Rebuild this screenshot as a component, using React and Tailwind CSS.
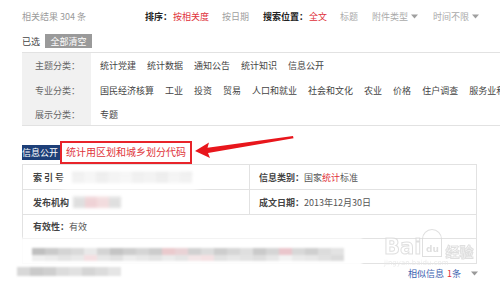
import { ChevronDown } from 'lucide-react';

const topics = ['统计党建', '统计数据', '通知公告', '统计知识', '信息公开'];
const majors = ['国民经济核算', '工业', '投资', '贸易', '人口和就业', '社会和文化', '农业', '价格', '住户调查', '服务业和'];

const blurLine1 = ['#b8b8b8', '#c4c4c4', '#cfcfcf', '#d6d6d6', '#e6e6e6', '#cfcfcf', '#bdbdbd', '#c8c8c8', '#d0d0d0', '#c6c6c6', '#e8c4c8', '#e6cdd0', '#cccccc', '#d8d8d8', '#c8c8c8', '#d2d2d2', '#dcdcdc', '#c4c4c4', '#d0d0d0', '#e8c0c6', '#d4d4d4', '#cacaca', '#d8d8d8', '#e0e0e0'];
const blurLine3 = ['#d4d4d4', '#c4c4c4', '#cacaca', '#d8d8d8', '#dedede', '#d0d0d0', '#d8d8d8', '#e2e2e2'];
const blurRow1 = ['#d6d6d6', '#e4e4e4', '#cfcfcf', '#dedede', '#e6e6e6', '#d4d4d4', '#dcdcdc', '#cccccc', '#e0e0e0', '#d6d6d6'];
const blurRow2 = ['#d8d8d8', '#ecc8cc', '#f0d4d6', '#d8d8d8'];

const Caret = () => (
  <svg width="7" height="5" viewBox="0 0 7 5" className="ml-[3px]">
    <path d="M0 0.5h7L3.5 4.5z" fill="#a0a0a0" />
  </svg>
);

const Blocks = ({ colors, w, h }) => (
  <div className="flex">
    {colors.map((c, i) => (
      <div key={i} style={{ background: c, width: w, height: h }} />
    ))}
  </div>
);

export default function App() {
  return (
    <div className="relative w-[500px] h-[286px] overflow-hidden bg-white font-['Noto_Sans_CJK_SC',sans-serif] text-[9px] leading-none text-[#333]">
      {/* result bar */}
      <div className="flex items-center h-[32px] pl-[22px]">
        <span className="w-[123px] text-[#9a9a9a]">相关结果 304 条</span>
        <span className="font-bold text-[#222]">排序：</span>
        <span className="ml-[1px] text-[#e0303a]">按相关度</span>
        <span className="ml-[13px] text-[#a0a0a0]">按日期</span>
        <span className="ml-[14px] font-bold text-[#222]">搜索位置：</span>
        <span className="ml-[1px] text-[#e0303a]">全文</span>
        <span className="ml-[13px] text-[#aaa]">标题</span>
        <span className="ml-[14px] flex items-center text-[#aaa]">附件类型<Caret /></span>
        <span className="ml-[15px] flex items-center text-[#aaa]">时间不限<Caret /></span>
      </div>

      {/* selected */}
      <div className="flex items-center h-[18px] pl-[22px]">
        <span className="text-[#444]">已选</span>
        <span className="ml-[5px] flex items-center justify-center w-[47px] h-[14px] bg-[#9a9a9a] text-white">全部清空</span>
      </div>

      {/* filter box */}
      <div className="ml-[22px] mt-[2px] border-t border-b border-[#e2e2e2]">
        {[
          ['主题分类：', topics, 'h-[25px]'],
          ['专业分类：', majors, 'h-[25px]'],
          ['展示分类：', ['专题'], 'h-[22px]'],
        ].map(([label, items, h]) => (
          <div key={label} className={`flex ${h}`}>
            <div className="w-[69px] shrink-0 bg-[#f1f1f1] flex items-center pl-[13px] text-[#666]">{label}</div>
            <div className="flex items-center gap-[11px] pl-[9px] whitespace-nowrap text-[#444]">
              {items.map((t) => (
                <span key={t}>{t}</span>
              ))}
            </div>
          </div>
        ))}
      </div>

      {/* title */}
      <div className="flex items-center h-[24px] ml-[22px] mt-[14px]">
        <span className="flex items-center h-[15px] w-[38px] bg-[#1d3f78] text-white whitespace-nowrap overflow-hidden">信息公开</span>
        <span className="flex items-center h-[23px] px-[4px] border-2 border-[#e8242a] text-[10px] text-[#e0343a]">统计用区划和城乡划分代码</span>
      </div>

      {/* detail table */}
      <div className="ml-[22px] w-[455px] border border-[#e2e2e2] text-[#555]">
        <div className="flex h-[25px] border-b border-[#e2e2e2]">
          <div className="w-[227px] flex items-center pl-[10px] border-r border-[#e2e2e2]">
            <span className="font-bold text-[#444] tracking-[2px]">索引号</span>
            <div className="ml-[6px] opacity-80 blur-[1.5px]">
              <Blocks colors={blurRow1} w={12} h={11} />
            </div>
          </div>
          <div className="flex items-center pl-[9px]">
            <span className="font-bold text-[#444]">信息类别：</span>
            <span>国家</span>
            <span className="text-[#e0303a]">统计</span>
            <span>标准</span>
          </div>
        </div>
        <div className="flex h-[25px] border-b border-[#e2e2e2]">
          <div className="w-[227px] flex items-center pl-[10px] border-r border-[#e2e2e2]">
            <span className="font-bold text-[#444]">发布机构</span>
            <div className="ml-[4px] opacity-80 blur-[1.5px]">
              <Blocks colors={blurRow2} w={12} h={12} />
            </div>
          </div>
          <div className="flex items-center pl-[9px]">
            <span className="font-bold text-[#444]">成文日期：</span>
            <span>2013年12月30日</span>
          </div>
        </div>
        <div className="flex items-center h-[24px] pl-[10px] border-b border-[#e2e2e2]">
          <span className="font-bold text-[#444]">有效性：</span>
          <span>有效</span>
        </div>
        <div className="h-[24px]" />
      </div>

      {/* similar */}
      <div className="flex items-center justify-end h-[16px] w-[478px] mt-[1px] text-[#3a62b0]">
        <span>相似信息</span>
        <span className="ml-[3px] text-[#e0303a]">1</span>
        <span>条</span>
        <svg width="7" height="5" viewBox="0 0 7 5" className="ml-[10px]">
          <path d="M0 0.5h7L3.5 4.5z" fill="#9a9a9a" />
        </svg>
      </div>

      {/* blurred overlay */}
      <div className="absolute left-[17px] top-[238px] w-[345px] h-[44px] bg-white/90 blur-[1px]">
        <div className="ml-[15px] mt-[10px] opacity-90">
          <Blocks colors={blurLine1} w={13} h={7} />
        </div>
        <div className="ml-[15px] opacity-50">
          <Blocks colors={blurLine1.slice().reverse()} w={13} h={6} />
        </div>
        <div className="mt-[6px] opacity-90">
          <Blocks colors={blurLine3} w={13} h={9} />
        </div>
      </div>
      <div className="absolute left-[60px] top-[170px] w-[140px] h-[26px] rounded-full bg-white/60 blur-[3px]" />

      {/* watermark */}
      <div className="absolute left-[384px] top-[228px] flex flex-col items-start gap-[2px] opacity-80 font-['DejaVu_Sans',sans-serif]">
        <div className="flex items-end h-[30px]">
          <span className="text-[21px] font-bold text-white [-webkit-text-stroke:1px_#d8d8d8]">Bai</span>
          <span className="ml-[1px] mb-[1px] flex items-end justify-center w-[20px] h-[28px] pb-[2px] rounded-t-full rounded-b-[8px] border border-[#d8d8d8] text-[9px] font-bold text-[#d8d8d8]">du</span>
          <span className="ml-[3px] text-[14px] font-bold text-white [-webkit-text-stroke:1px_#d8d8d8] font-['Noto_Sans_CJK_SC',sans-serif]">经验</span>
        </div>
        <span className="text-[7px] text-[#e6e6e6]">jingyan.baidu.com</span>
      </div>

      {/* arrow */}
      <svg className="absolute left-0 top-0" width="500" height="286">
        <path d="M195 151 L209 142.5 L207.5 147.8 L293 136 L293.5 138.2 L208 153 L210 158 Z" fill="#e8161c" />
      </svg>
    </div>
  );
}
